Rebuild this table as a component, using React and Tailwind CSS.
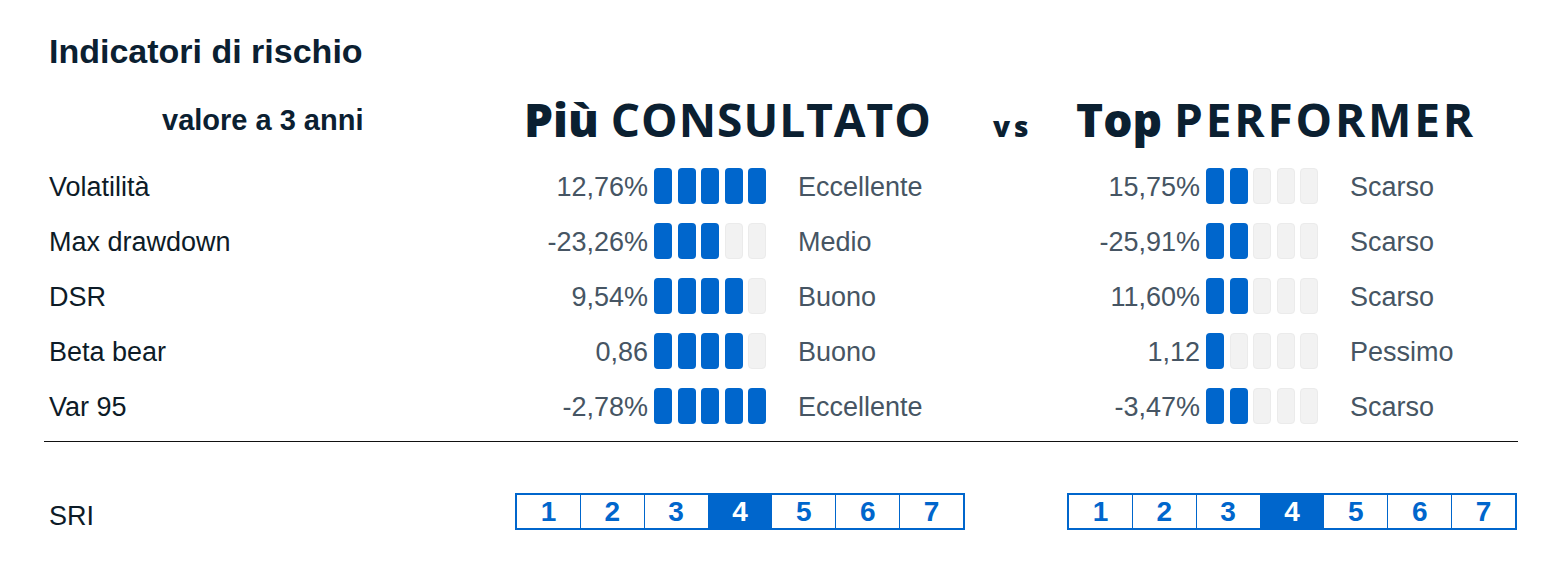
import React from 'react';

const rows = [
  { label: 'Volatilità', a: { value: '12,76%', score: 5, rating: 'Eccellente' }, b: { value: '15,75%', score: 2, rating: 'Scarso' } },
  { label: 'Max drawdown', a: { value: '-23,26%', score: 3, rating: 'Medio' }, b: { value: '-25,91%', score: 2, rating: 'Scarso' } },
  { label: 'DSR', a: { value: '9,54%', score: 4, rating: 'Buono' }, b: { value: '11,60%', score: 2, rating: 'Scarso' } },
  { label: 'Beta bear', a: { value: '0,86', score: 4, rating: 'Buono' }, b: { value: '1,12', score: 1, rating: 'Pessimo' } },
  { label: 'Var 95', a: { value: '-2,78%', score: 5, rating: 'Eccellente' }, b: { value: '-3,47%', score: 2, rating: 'Scarso' } },
];

const headFont = { fontFamily: '"Open Sans", sans-serif' };

function Bars({ score }) {
  return (
    <div className="flex gap-[5.5px] ml-[6px]">
      {[1, 2, 3, 4, 5].map((i) => (
        <div
          key={i}
          className={
            i <= score
              ? 'w-[18px] h-[36px] rounded-[4px] bg-[#0066cc]'
              : 'w-[18px] h-[36px] rounded-[4px] bg-[#f2f2f2] border border-[#ebebeb]'
          }
        />
      ))}
    </div>
  );
}

function Metric({ data, ratingWidth }) {
  return (
    <>
      <div className="w-[128px] text-right pt-[4px]">{data.value}</div>
      <Bars score={data.score} />
      <div className={`${ratingWidth} pl-[32px] pt-[4px]`}>{data.rating}</div>
    </>
  );
}

function Sri({ active }) {
  return (
    <div className="flex w-[450px] h-[37px] border-2 border-[#0066cc] divide-x divide-[#0066cc]">
      {[1, 2, 3, 4, 5, 6, 7].map((n) => (
        <div
          key={n}
          className={
            n === active
              ? 'flex-1 flex items-center justify-center bg-[#0066cc] text-white font-bold text-[28px] leading-none'
              : 'flex-1 flex items-center justify-center text-[#0066cc] font-bold text-[28px] leading-none'
          }
        >
          {n}
        </div>
      ))}
    </div>
  );
}

export default function App() {
  return (
    <div
      className="w-[1548px] h-[581px] bg-white pt-[34px] pl-[49px] text-[#0d1b27]"
      style={{ fontFamily: '"Liberation Sans", Arial, sans-serif' }}
    >
      <h1 className="text-[34px] leading-none font-bold text-[#0b2031]">Indicatori di rischio</h1>

      <div className="mt-[12px] h-[78px] pt-[16px] flex items-baseline text-[#0b2031]">
        <div className="w-[471px] pl-[113px] text-[29px] leading-none font-bold self-start mt-[10px]">
          valore a 3 anni
        </div>
        <div className="w-[473px] pl-[4px] text-[46px] leading-none" style={headFont}>
          <span className="font-extrabold">Più</span>{' '}
          <span className="font-bold tracking-[1px]">CONSULTATO</span>
        </div>
        <div className="w-[83px] text-[28px] leading-none font-extrabold tracking-[4px]" style={headFont}>
          vs
        </div>
        <div className="text-[46px] leading-none" style={headFont}>
          <span className="font-extrabold">Top</span>{' '}
          <span className="font-bold tracking-[2.8px]">PERFORMER</span>
        </div>
      </div>

      <div className="text-[27px]">
        {rows.map((r) => (
          <div key={r.label} className="h-[55px] flex items-center">
            <div className="w-[471px] pt-[4px]">{r.label}</div>
            <div className="flex items-center text-[#465563]">
              <Metric data={r.a} ratingWidth="w-[306px]" />
              <Metric data={r.b} ratingWidth="w-[200px]" />
            </div>
          </div>
        ))}
      </div>

      <div className="mt-[8px] -ml-[5px] w-[1474px] h-px bg-[#111]" />

      <div className="mt-[51px] flex items-start">
        <div className="w-[466px] text-[27px] mt-[3px]">SRI</div>
        <Sri active={4} />
        <div className="w-[102px]" />
        <Sri active={4} />
      </div>
    </div>
  );
}
